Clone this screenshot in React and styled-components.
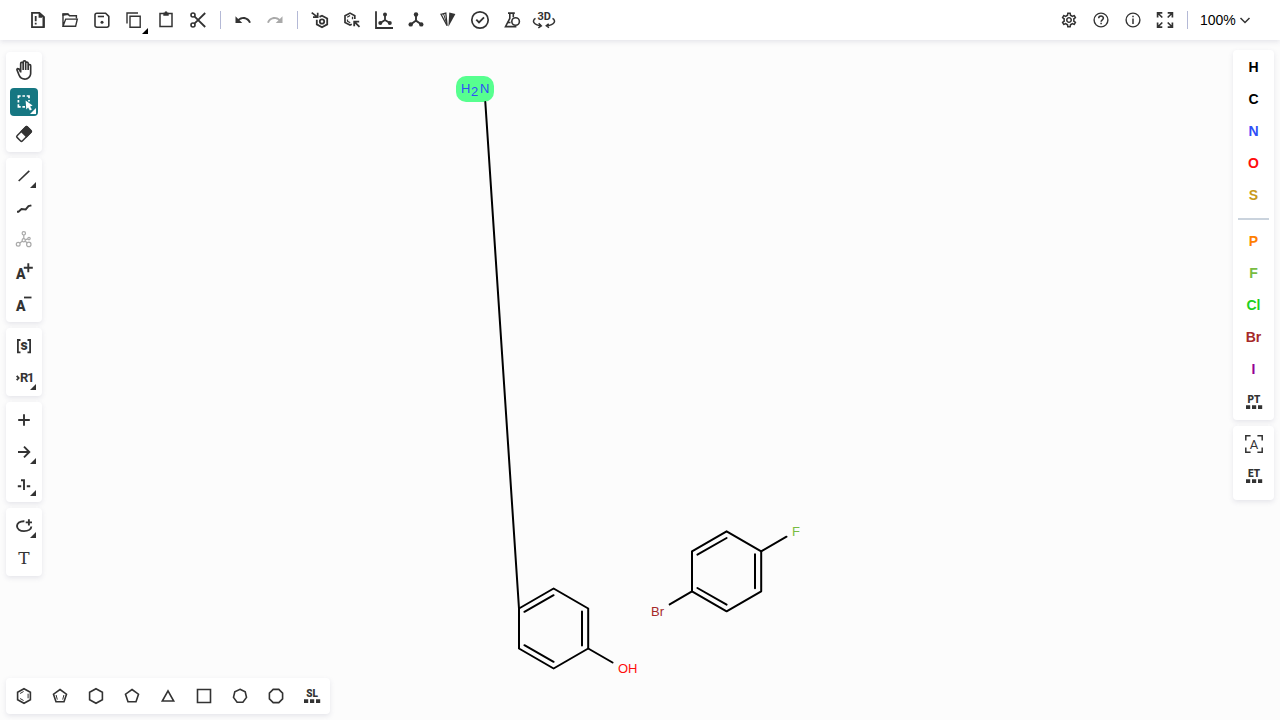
import React, { useState } from "react";
import styled, { createGlobalStyle, css } from "styled-components";
import {
  MdUndo,
  MdRedo,
  MdOutlineSettings,
  MdOutlineBackHand,
} from "react-icons/md";

const ink = "#333333";
const teal = "#167782";

const GlobalStyle = createGlobalStyle`
  *, *::before, *::after { box-sizing: border-box; }
  body {
    margin: 0;
    background: #fcfcfc;
    color: ${ink};
    font-family: "Liberation Sans", Arial, sans-serif;
    font-size: 14px;
  }
`;

const Page = styled.div`
  min-height: 100vh;
  display: grid;
  grid-template-rows: 40px 1fr;
`;

const Header = styled.header`
  position: relative;
  z-index: 1;
  display: flex;
  align-items: center;
  justify-content: space-between;
  padding: 0 24px;
  background: #ffffff;
  box-shadow: 0 2px 5px rgba(103, 104, 132, 0.15);
`;

const HeaderSide = styled.div`
  display: flex;
  align-items: center;
`;

const ButtonRow = styled.div`
  display: flex;
  gap: 4px;
`;

const Separator = styled.span`
  width: 1px;
  height: 18px;
  margin: 0 8px;
  background: #b4b9d6;
`;

const ToolButton = styled.button`
  position: relative;
  flex: none;
  width: 28px;
  height: 28px;
  display: grid;
  place-items: center;
  padding: 0;
  border: 0;
  border-radius: 4px;
  background: transparent;
  color: ${ink};
  font: inherit;
  cursor: pointer;

  &:disabled {
    color: #a9a9a9;
    cursor: default;
  }

  ${(p) =>
    p.$active &&
    css`
      background: ${teal};
      color: #ffffff;
    `}
`;

const Corner = styled.span`
  position: absolute;
  right: ${(p) => p.$inset}px;
  bottom: ${(p) => p.$inset}px;
  width: 6px;
  height: 6px;
  background: ${(p) => (p.$inset ? "currentColor" : "#000000")};
  clip-path: polygon(100% 0, 100% 100%, 0 100%);
`;

const ZoomField = styled.label`
  display: grid;
  align-items: center;
  width: 60px;
  height: 28px;
  color: #000000;

  & > * {
    grid-area: 1 / 1;
  }
  svg {
    justify-self: end;
    margin-right: 5px;
    pointer-events: none;
  }
`;

const ZoomSelect = styled.select`
  appearance: none;
  width: 100%;
  height: 28px;
  padding: 0 0 0 4px;
  border: 0;
  background: transparent;
  color: inherit;
  font: inherit;
`;

const Workspace = styled.main`
  display: grid;
  grid-template-columns: auto 1fr auto;
  grid-template-rows: 1fr auto;
`;

const Canvas = styled.svg`
  grid-area: 1 / 1 / -1 / -1;
  width: 100%;
  height: 100%;
  font-size: 13px;
`;

const LeftTools = styled.nav`
  grid-area: 1 / 1;
  z-index: 1;
  align-self: start;
  display: flex;
  flex-direction: column;
  gap: 6px;
  padding: 12px 0 6px 6px;
`;

const RightTools = styled(LeftTools)`
  grid-area: 1 / 3;
  padding: 10px 6px 6px 0;
`;

const BottomTools = styled.nav`
  grid-area: 2 / 1 / 3 / -1;
  z-index: 1;
  justify-self: start;
  padding: 0 6px 6px;
`;

const Panel = styled.div`
  display: flex;
  flex-direction: ${(p) => (p.$row ? "row" : "column")};
  align-items: center;
  gap: ${(p) => (p.$row ? 8 : 4)}px;
  min-width: ${(p) => (p.$wide ? 41 : 36)}px;
  padding: 4px 4px ${(p) => (p.$tail ? 10 : 4)}px;
  border-radius: 4px;
  background: #ffffff;
  box-shadow: 0 2px 5px rgba(103, 104, 132, 0.15);
`;

const AtomButton = styled(ToolButton)`
  padding-bottom: 2px;
  color: ${(p) => p.$color};
  font-weight: 700;
`;

const PanelRule = styled.hr`
  width: 31px;
  height: 2px;
  margin: 4px 0;
  border: 0;
  background: #cad3dd;
`;

const Glyph = styled.svg`
  width: 24px;
  height: 24px;
  fill: none;
  stroke: currentColor;
  stroke-width: 1.6;

  .solid {
    fill: currentColor;
    stroke: none;
  }
  .thin {
    stroke-width: 1;
  }
  text {
    fill: currentColor;
    stroke: none;
    font-family: Roboto, sans-serif;
    font-weight: 700;
  }
  .heavy {
    font-weight: 900;
  }
  .regular {
    font-weight: 400;
  }
  .slab {
    font-family: "DejaVu Serif", serif;
  }
`;

const Icon = ({ children }) => (
  <Glyph viewBox="0 0 24 24" aria-hidden="true">
    {children}
  </Glyph>
);

const TableIcon = ({ children }) => (
  <Icon>
    <text className="heavy" x="12" y="13" fontSize="10" textAnchor="middle">
      {children}
    </text>
    <path className="solid" d="M4 15.3h4.2v3.7H4zM10 15.3h4.2v3.7H10zM16 15.3h4.2v3.7H16z" />
  </Icon>
);

const icons = {
  clear: (
    <Icon>
      <path strokeWidth="1.8" d="M6 4.900h7.400L17.900 9v10.100H6z" />
      <path className="solid" d="M12.600 4.500v5.200h5.700zM16.500 9h2v10h-2z" />
      <path strokeWidth="1.800" d="M9.700 8v5.200M9.700 14.800v1.700" />
    </Icon>
  ),
  open: (
    <Icon>
      <path strokeWidth="1.400" d="M5 18.300V6h5l1.500 1.700h6.900v2.600M5 18.300l2.700-7.200h11.600l-1.700 7.200z" />
      <path className="solid" d="M4.500 5.500H10l1.600 1.800H8.500L4.500 8z" />
    </Icon>
  ),
  save: (
    <Icon>
      <path d="M6.800 5.200h8.800l3.200 3.200v9a1.800 1.800 0 0 1-1.800 1.800H6.800A1.800 1.800 0 0 1 5 17.400V7a1.800 1.800 0 0 1 1.800-1.800z" />
      <path d="M7.800 8.500h6.200" />
      <circle className="solid" cx="12" cy="14.300" r="1.500" />
    </Icon>
  ),
  copy: (
    <Icon>
      <path strokeWidth="1.400" d="M5 15.500V5h11M8 8.200h10.200v11H8z" />
    </Icon>
  ),
  paste: (
    <Icon>
      <path strokeWidth="1.500" d="M6 5.500h12v13H6z" />
      <path className="solid" d="M9.300 4.700h1.200a1.500 1.500 0 0 1 3 0h1.200v3.100H9.300z" />
    </Icon>
  ),
  cut: (
    <Icon>
      <circle cx="7" cy="7" r="2" />
      <circle cx="7" cy="17" r="2" />
      <path strokeWidth="1.800" d="M8.400 8.400 19.200 19M8.400 15.600 19.200 5" />
    </Icon>
  ),
  layout: (
    <Icon>
      <path strokeWidth="1.700" d="m3.700 4.600 5.500 4.300M9.700 4.800v4.400H5" />
      <path strokeWidth="1.800" d="M11.500 8.900 14 7.800l5.200 2.700v5.900L14 19.200l-5.200-2.800v-4.600" />
      <circle cx="14" cy="13.500" r="2.200" strokeWidth="1.800" />
    </Icon>
  ),
  clean: (
    <Icon>
      <path strokeWidth="1.700" d="M14.800 11V7.700L10 5.100 5 7.800v6.600l5 2.700 1.800-.9" />
      <path strokeWidth="1.300" d="m7.200 9.200 2.900-1.700M12.500 8.800v2.500M7.500 11.500v1.700l2.700 1.500" />
      <path strokeWidth="1.800" d="m19.500 18.900-5-5M14.200 18.300v-4.700h5" />
    </Icon>
  ),
  calcLayout: (
    <Icon>
      <path strokeWidth="1.800" d="M4 3.300V20h17M13 6.500V12l-4.700 3.100M13 12l4.800 3.100" />
      <circle className="solid" cx="13" cy="6.400" r="2" />
      <circle className="solid" cx="8.300" cy="15" r="2" />
      <circle className="solid" cx="17.800" cy="15" r="2" />
    </Icon>
  ),
  aromatize: (
    <Icon>
      <path strokeWidth="1.900" d="M12 7v5.600l-5 3.600M12 12.600l5.100 3.600" />
      <circle className="solid" cx="12" cy="6.500" r="2.200" />
      <circle className="solid" cx="6.700" cy="16.400" r="2.200" />
      <circle className="solid" cx="17.300" cy="16.400" r="2.200" />
    </Icon>
  ),
  stereo: (
    <Icon>
      <path strokeWidth="1.300" d="m5 6.300 4.800-1.200 1.300 12.600z" />
      <path className="thin" d="m7.600 6 2.600 8" />
      <path className="solid" d="m13.300 4.600 6.100 1.500-7 12.700z" />
    </Icon>
  ),
  check: (
    <Icon>
      <circle cx="12" cy="12" r="8.200" strokeWidth="1.700" />
      <path strokeWidth="1.900" d="m8.300 11.700 2.700 2.700 5-5" />
    </Icon>
  ),
  analyse: (
    <Icon>
      <path d="M8 5.100h6.800M9.800 5.500v5L5.500 18.600h10.900M13.300 5.500v3.800" />
      <circle cx="15.600" cy="13.500" r="3.800" />
      <path d="M7.500 14.500h3" />
    </Icon>
  ),
  threeD: (
    <Icon>
      <text x="12.300" y="12" fontSize="11" textAnchor="middle">3D</text>
      <path strokeWidth="1.500" d="M3.500 10.400c-4 2.300-2 6.500 5.500 7.300M20.500 10.400c4 2.300 2 6.500-5.500 7.300M6.700 15.200l2.600 2.600-3 2M16.700 15.700l-2.400 2.100 2.700 1.900" />
    </Icon>
  ),
  help: (
    <Icon>
      <circle cx="12" cy="12" r="6.900" strokeWidth="1.400" />
      <path strokeWidth="1.500" d="M9.700 10.300c0-3 4.700-2.900 4.700-.2 0 1.700-2.300 1.700-2.300 3.600M12.100 14.800v1.500" />
    </Icon>
  ),
  about: (
    <Icon>
      <circle cx="12" cy="12" r="6.900" strokeWidth="1.400" />
      <path strokeWidth="1.500" d="M12 10.600v5.500M12 7.700v1.600" />
    </Icon>
  ),
  fullscreen: (
    <Icon>
      <path strokeWidth="1.700" d="M4.600 9.500V4.800h4.700M4.800 5l4.500 4.500M14.700 4.800h4.700v4.700M19.200 5l-4.500 4.500M4.600 14.500v4.700h4.700M4.800 19l4.500-4.500M19.400 14.500v4.700h-4.700M19.200 19l-4.500-4.500" />
    </Icon>
  ),
  select: (
    <Icon>
      <path strokeWidth="1.700" d="M6.400 8.300V6h2.300M10.400 6h2.600M14.700 6H17v2.300M6.400 10v2.500M6.400 14.300v2.500h2.300M10.400 16.800H13M17 10v1.500" />
      <path className="solid" d="m13.600 10.500 7 5.100-2.500.8 1.800 3-2 1.100-1.800-3-1.800 1.900z" />
    </Icon>
  ),
  erase: (
    <Icon>
      <g transform="rotate(-45 12 12)">
        <rect x="4.700" y="8.300" width="14.600" height="7.400" rx="1.200" strokeWidth="1.500" />
        <path className="solid" d="M11.200 7.600h7.300a1.500 1.500 0 0 1 1.500 1.500v5.800a1.500 1.500 0 0 1-1.500 1.500h-7.300z" />
      </g>
    </Icon>
  ),
  bond: (
    <Icon>
      <path d="M6.700 17 17.300 6.800" />
    </Icon>
  ),
  chain: (
    <Icon>
      <path strokeWidth="1.900" d="M5 15.700h1.500l3-2.700 4.200.4 2.800-3.200 2.900-.9" />
    </Icon>
  ),
  enhanced: (
    <Icon>
      <g strokeWidth="1.200">
        <circle cx="11.800" cy="5.300" r="1.700" />
        <circle cx="11.700" cy="12.300" r="1.600" />
        <circle cx="6.200" cy="16.300" r="1.900" />
        <circle cx="16.800" cy="16.400" r="2.200" />
        <circle cx="17" cy="10.600" r="1.200" />
        <path d="M11.800 7v3.700M10.200 13.300l-2.400 1.800M13.200 13.300l2 1.500M13.200 11.900l2.600-1" />
      </g>
    </Icon>
  ),
  chargePlus: (
    <Icon>
      <text className="heavy" x="4" y="19" fontSize="14">A</text>
      <path strokeWidth="1.900" d="M11.800 7.800h9M16.300 3.300v9" />
    </Icon>
  ),
  chargeMinus: (
    <Icon>
      <text className="heavy" x="4" y="19" fontSize="14">A</text>
      <path strokeWidth="1.800" d="M12 5.500h7.500" />
    </Icon>
  ),
  sgroup: (
    <Icon>
      <path strokeWidth="1.800" d="M8.500 6H5.900v12.300h2.600M15.500 6h2.600v12.300h-2.600" />
      <text className="heavy" x="12" y="16" fontSize="14" textAnchor="middle">s</text>
    </Icon>
  ),
  rgroup: (
    <Icon>
      <path strokeWidth="1.800" d="m4.700 9.800 2 2.200-2 2.200" />
      <text y="16" fontSize="13">
        <tspan x="8">R</tspan>
        <tspan x="15">1</tspan>
      </text>
    </Icon>
  ),
  plus: (
    <Icon>
      <path strokeWidth="1.900" d="M6.200 12h11.600M12 6.200v11.600" />
    </Icon>
  ),
  arrow: (
    <Icon>
      <path strokeWidth="1.900" d="M6 12h11M12 6.700l5.300 5.300-5.300 5.300" />
    </Icon>
  ),
  mapping: (
    <Icon>
      <path strokeWidth="1.900" d="M9 8.200h3V18M5.800 14.200h3.400M14.800 14.200h3.400" />
    </Icon>
  ),
  shape: (
    <Icon>
      <path strokeWidth="1.900" d="M12.400 7.200C7.700 7 5 9.300 5 12c0 3 3 5.100 7 5.100 4.300 0 7.300-2 7.300-4.600" />
      <path strokeWidth="1.900" d="M13.700 8.400H20M16.900 5.200v6.300" />
    </Icon>
  ),
  text: (
    <Icon>
      <text className="slab regular" x="12" y="18" fontSize="17" textAnchor="middle">T</text>
    </Icon>
  ),
  benzene: (
    <Icon>
      <path d="m12 4.700 6.400 3.600v7.400L12 19.300l-6.400-3.600V8.300z" />
      <path className="thin" d="m8.100 9.500 3.500-2M16.100 9.700v4.600M8.100 14.500l3.500 2" />
    </Icon>
  ),
  cyclopentadiene: (
    <Icon>
      <path d="m12 5.500 6.500 4.700-2.500 7.600H8l-2.500-7.600z" />
      <path className="thin" d="m8.100 11 1.200 4.600M15.900 11l-1.200 4.600" />
    </Icon>
  ),
  cyclohexane: (
    <Icon>
      <path d="m12 4.700 6.400 3.600v7.400L12 19.300l-6.400-3.600V8.300z" />
    </Icon>
  ),
  cyclopentane: (
    <Icon>
      <path d="m12 5.500 6.500 4.700-2.500 7.600H8l-2.500-7.600z" />
    </Icon>
  ),
  cyclopropane: (
    <Icon>
      <path d="m12 6.800 5.700 10.200H6.300z" />
    </Icon>
  ),
  cyclobutane: (
    <Icon>
      <path d="M5.500 5.500h13v13h-13z" />
    </Icon>
  ),
  cycloheptane: (
    <Icon>
      <path d="m12 5.300 5.200 2.500 1.300 5.600-3.600 4.900H9.100l-3.600-4.900 1.300-5.600z" />
    </Icon>
  ),
  cyclooctane: (
    <Icon>
      <path d="M9.200 5.400h5.600l3.800 3.800v5.600l-3.800 3.800H9.200l-3.800-3.800V9.200z" />
    </Icon>
  ),
  library: <TableIcon>SL</TableIcon>,
  periodic: <TableIcon>PT</TableIcon>,
  extended: <TableIcon>ET</TableIcon>,
  anyAtom: (
    <Icon>
      <path strokeWidth="1.500" d="M3.800 8.500V3.700h4.800M15.400 3.700h4.800v4.800M20.200 15.500v4.800h-4.800M8.600 20.300H3.800v-4.800" />
      <text className="regular" x="12" y="17" fontSize="13" textAnchor="middle">A</text>
    </Icon>
  ),
};

const fileTools = [
  ["Clear canvas", icons.clear],
  ["Open", icons.open],
  ["Save", icons.save],
  ["Copy", icons.copy, true],
  ["Paste", icons.paste],
  ["Cut", icons.cut],
];

const structureTools = [
  ["Layout", icons.layout],
  ["Clean up", icons.clean],
  ["Aromatize", icons.calcLayout],
  ["Dearomatize", icons.aromatize],
  ["Calculate CIP", icons.stereo],
  ["Check structure", icons.check],
  ["Calculated values", icons.analyse],
  ["3D viewer", icons.threeD],
];

const helpTools = [
  ["Settings", <MdOutlineSettings size={18} />],
  ["Help", icons.help],
  ["About", icons.about],
  ["Fullscreen", icons.fullscreen],
];

const leftPanels = [
  [
    ["Hand tool", <MdOutlineBackHand size={20} />],
    ["Rectangle selection", icons.select, true],
    ["Erase", icons.erase],
  ],
  [
    ["Single bond", icons.bond, true],
    ["Chain", icons.chain],
    ["Stereochemistry", icons.enhanced, false, true],
    ["Charge plus", icons.chargePlus],
    ["Charge minus", icons.chargeMinus],
  ],
  [
    ["S-Group", icons.sgroup],
    ["R-Group label", icons.rgroup, true],
  ],
  [
    ["Reaction plus", icons.plus],
    ["Reaction arrow", icons.arrow, true],
    ["Reaction mapping", icons.mapping, true],
  ],
  [
    ["Shape", icons.shape, true],
    ["Add text", icons.text],
  ],
];

const templates = [
  ["Benzene", icons.benzene],
  ["Cyclopentadiene", icons.cyclopentadiene],
  ["Cyclohexane", icons.cyclohexane],
  ["Cyclopentane", icons.cyclopentane],
  ["Cyclopropane", icons.cyclopropane],
  ["Cyclobutane", icons.cyclobutane],
  ["Cycloheptane", icons.cycloheptane],
  ["Cyclooctane", icons.cyclooctane],
  ["Structure library", icons.library],
];

const commonAtoms = [
  ["H", "#000000"],
  ["C", "#000000"],
  ["N", "#304ff7"],
  ["O", "#ff0d0d"],
  ["S", "#c99a19"],
];

const moreAtoms = [
  ["P", "#ff8000"],
  ["F", "#78bc42"],
  ["Cl", "#1fd01f"],
  ["Br", "#a62929"],
  ["I", "#940094"],
];

const Tool = ({ label, icon, menu, inset = 2, active, ...rest }) => (
  <ToolButton
    type="button"
    aria-label={label}
    title={label}
    aria-haspopup={menu ? "menu" : undefined}
    $active={active}
    {...rest}
  >
    {icon}
    {menu && <Corner $inset={inset} />}
  </ToolButton>
);

const ToolRow = ({ items }) => (
  <ButtonRow>
    {items.map(([label, icon, menu]) => (
      <Tool key={label} label={label} icon={icon} menu={menu} inset={0} />
    ))}
  </ButtonRow>
);

// Six-membered aromatic ring around its centre, bond length 40.
const Ring = ({ x, y }) => (
  <path
    transform={`translate(${x} ${y})`}
    d="M0-40 34.600-20V20L0 40-34.600 20V-20ZM-29.200-16.700 0-33.300M28.400-17V17M-29.200 16.700 0 33.300"
  />
);

const Atom = ({ label, color, onPick }) => (
  <AtomButton type="button" $color={color} onClick={onPick}>
    {label}
  </AtomButton>
);

export default function App() {
  const [tool, setTool] = useState("Rectangle selection");

  return (
    <>
      <GlobalStyle />
      <Page>
        <Header>
          <HeaderSide>
            <ToolRow items={fileTools} />
            <Separator />
            <ButtonRow>
              <Tool label="Undo" icon={<MdUndo size={18} />} />
              <Tool label="Redo" icon={<MdRedo size={18} />} disabled />
            </ButtonRow>
            <Separator />
            <ToolRow items={structureTools} />
          </HeaderSide>
          <HeaderSide>
            <ToolRow items={helpTools} />
            <Separator />
            <ZoomField>
              <ZoomSelect aria-label="Zoom" defaultValue="100%">
                <option>50%</option>
                <option>100%</option>
                <option>200%</option>
              </ZoomSelect>
              <svg width="12" height="12" viewBox="0 0 12 12" fill="none" stroke={ink} strokeWidth="1.500" aria-hidden="true">
                <path d="m1.500 4 4.500 4.500L10.500 4" />
              </svg>
            </ZoomField>
          </HeaderSide>
        </Header>

        <Workspace>
          <Canvas role="img" aria-label="Structure canvas">
            <rect x="456" y="36" width="38" height="26" rx="10" fill="#57ff8f" />
            <g fill="none" stroke="#000000" strokeWidth="2" strokeLinecap="round" strokeLinejoin="round">
              <path d="M485.300 62 519 568.500M588.200 608.500 612.500 622.500" />
              <Ring x={553.6} y={588.5} />
              <path d="M761.200 511.300 786.500 496.700M692 551.300 669.700 564.400" />
              <Ring x={726.6} y={531.3} />
            </g>
            <text y="53" fill="#304ff7">
              <tspan x="461">H</tspan>
              <tspan x="471" y="56">2</tspan>
              <tspan x="480" y="53">N</tspan>
            </text>
            <text x="618" y="633" fill="#ff0d0d">OH</text>
            <text x="651" y="576" fill="#a62929">Br</text>
            <text x="792" y="496" fill="#78bc42">F</text>
          </Canvas>

          <LeftTools aria-label="Drawing tools">
            {leftPanels.map((panel) => (
              <Panel key={panel[0][0]}>
                {panel.map(([label, icon, menu, disabled]) => (
                  <Tool
                    key={label}
                    label={label}
                    icon={icon}
                    menu={menu}
                    disabled={disabled}
                    active={tool === label}
                    aria-pressed={tool === label}
                    onClick={() => setTool(label)}
                  />
                ))}
              </Panel>
            ))}
          </LeftTools>

          <RightTools aria-label="Atoms">
            <Panel $wide>
              {commonAtoms.map(([label, color]) => (
                <Atom key={label} label={label} color={color} onPick={() => setTool(label)} />
              ))}
              <PanelRule />
              {moreAtoms.map(([label, color]) => (
                <Atom key={label} label={label} color={color} onPick={() => setTool(label)} />
              ))}
              <Tool label="Periodic table" icon={icons.periodic} />
            </Panel>
            <Panel $wide $tail>
              <Tool label="Any atom" icon={icons.anyAtom} />
              <Tool label="Extended table" icon={icons.extended} />
            </Panel>
          </RightTools>

          <BottomTools aria-label="Templates">
            <Panel $row>
              {templates.map(([label, icon]) => (
                <Tool key={label} label={label} icon={icon} />
              ))}
            </Panel>
          </BottomTools>
        </Workspace>
      </Page>
    </>
  );
}
